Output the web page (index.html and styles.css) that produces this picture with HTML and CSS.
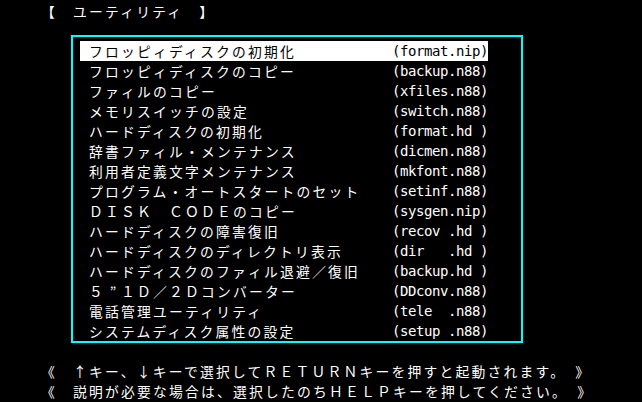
FILE: index.html
```html
<!DOCTYPE html>
<html lang="ja">
<head>
<meta charset="utf-8">
<title>ユーティリティ</title>
<link rel="stylesheet" href="styles.css">
</head>
<body>
<div class="screen">
  <div class="title">【　ユーティリティ　】</div>
  <div class="menu">
    <div class="item selected"><span class="label">フロッピィディスクの初期化</span><span class="code">(format.nip)</span></div>
    <div class="item"><span class="label">フロッピィディスクのコピー</span><span class="code">(backup.n88)</span></div>
    <div class="item"><span class="label">ファィルのコピー</span><span class="code">(xfiles.n88)</span></div>
    <div class="item"><span class="label">メモリスイッチの設定</span><span class="code">(switch.n88)</span></div>
    <div class="item"><span class="label">ハードディスクの初期化</span><span class="code">(format.hd )</span></div>
    <div class="item"><span class="label">辞書ファィル・メンテナンス</span><span class="code">(dicmen.n88)</span></div>
    <div class="item"><span class="label">利用者定義文字メンテナンス</span><span class="code">(mkfont.n88)</span></div>
    <div class="item"><span class="label">プログラム・オートスタートのセット</span><span class="code">(setinf.n88)</span></div>
    <div class="item"><span class="label">ＤＩＳＫ　ＣＯＤＥのコピー</span><span class="code">(sysgen.nip)</span></div>
    <div class="item"><span class="label">ハードディスクの障害復旧</span><span class="code">(recov .hd )</span></div>
    <div class="item"><span class="label">ハードディスクのディレクトリ表示</span><span class="code">(dir   .hd )</span></div>
    <div class="item"><span class="label">ハードディスクのファィル退避／復旧</span><span class="code">(backup.hd )</span></div>
    <div class="item"><span class="label">５<span class="fw">”</span>１Ｄ／２Ｄコンバーター</span><span class="code">(DDconv.n88)</span></div>
    <div class="item"><span class="label">電話管理ユーティリティ</span><span class="code">(tele  .n88)</span></div>
    <div class="item"><span class="label">システムディスク属性の設定</span><span class="code">(setup .n88)</span></div>
  </div>
  <div class="help">
    <div class="line">《　↑キー、↓キーで選択してＲＥＴＵＲＮキーを押すと起動されます。　》</div>
    <div class="line">《　説明が必要な場合は、選択したのちＨＥＬＰキーを押してください。　》</div>
  </div>
</div>
</body>
</html>
```
FILE: styles.css
```css
html, body {
  margin: 0;
  padding: 0;
  background: #000;
}

body {
  width: 642px;
  height: 402px;
  overflow: hidden;
  color: #fff;
  font-family: "Noto Sans CJK JP", "Noto Sans CJK SC", sans-serif;
  font-size: 13.8px;
  letter-spacing: 2.2px;
  line-height: 20px;
}

.screen {
  width: 640px;
  padding-top: 1px;
}

.title {
  height: 20px;
  padding-left: 41px;
  white-space: pre;
}

.menu {
  margin: 14px 0 0 71px;
  width: 408px;
  border: 2px solid #00ffff;
  padding: 4px 33px 0 7px;
}

.item {
  display: flex;
  height: 20px;
  white-space: pre;
}

.item.selected {
  background: #fff;
  color: #000;
}

.label {
  width: 303px;
  padding-left: 9px;
  white-space: pre;
  overflow: hidden;
}

.fw {
  display: inline-block;
  width: 16px;
  letter-spacing: 0;
  text-align: center;
}

.code {
  width: 96px;
  font-family: "DejaVu Sans Mono", "Liberation Mono", monospace;
  font-size: 14px;
  letter-spacing: -0.43px;
  white-space: pre;
}

.help {
  margin-top: 18px;
  padding-left: 41px;
}

.line {
  height: 20px;
  white-space: pre;
}
```
